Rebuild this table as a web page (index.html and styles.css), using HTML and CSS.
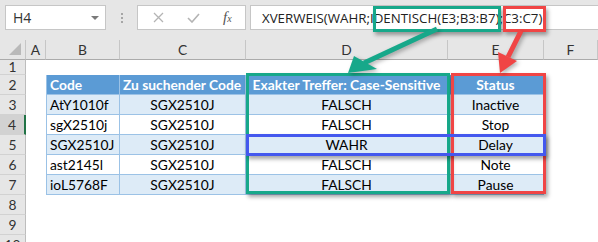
FILE: index.html
```html
<!DOCTYPE html>
<html>
	<head>
		<meta charset="UTF-8">
		<title>XVERWEIS - Case-Sensitive</title>
		<link rel="stylesheet" href="styles.css">
	</head>

	<body>
		<div class="app">
			<!-- Namenfeld + Bearbeitungsleiste -->
			<div class="bar">
				<div class="namebox">H4<span class="drop"></span></div>
				<div class="grip"><i></i><i></i><i></i></div>
				<div class="fxbox">
					<svg class="cancel" width="11" height="11" viewBox="0 0 11 11"><path d="M1 1L10 10M10 1L1 10" stroke="#b4b4b4" stroke-width="1.3" fill="none"/></svg>
					<svg class="enter" width="13" height="10" viewBox="0 0 13 10"><path d="M1 5L5 9L12 1" stroke="#b4b4b4" stroke-width="1.6" fill="none"/></svg>
					<span class="fx">f<sub>x</sub></span>
				</div>
				<div class="formula">XVERWEIS(WAHR;IDENTISCH(E3;B3:B7);C3:C7)</div>
			</div>

			<!-- Tabellenblatt -->
			<div class="sheet">
				<div class="corner"></div>
				<div class="ch">A</div><div class="ch">B</div><div class="ch">C</div><div class="ch">D</div><div class="ch">E</div><div class="ch">F</div>

				<div class="rh r1">1</div><div></div><div></div><div></div><div></div><div></div><div></div>

				<div class="rh">2</div><div></div>
				<div class="th first">Code</div>
				<div class="th">Zu suchender Code</div>
				<div class="th mid">Exakter Treffer: Case-Sensitive</div>
				<div class="th mid">Status</div>
				<div></div>

				<div class="rh">3</div><div></div>
				<div class="td first band">AtY1010f</div>
				<div class="td mid band">SGX2510J</div>
				<div class="td mid band">FALSCH</div>
				<div class="td mid band">Inactive</div>
				<div></div>

				<div class="rh sel">4</div><div></div>
				<div class="td first">sgX2510j</div>
				<div class="td mid">SGX2510J</div>
				<div class="td mid">FALSCH</div>
				<div class="td mid">Stop</div>
				<div></div>

				<div class="rh">5</div><div></div>
				<div class="td first band">SGX2510J</div>
				<div class="td mid band">SGX2510J</div>
				<div class="td mid band">WAHR</div>
				<div class="td mid band">Delay</div>
				<div></div>

				<div class="rh">6</div><div></div>
				<div class="td first">ast2145l</div>
				<div class="td mid">SGX2510J</div>
				<div class="td mid">FALSCH</div>
				<div class="td mid">Note</div>
				<div></div>

				<div class="rh">7</div><div></div>
				<div class="td first band">ioL5768F</div>
				<div class="td mid band">SGX2510J</div>
				<div class="td mid band">FALSCH</div>
				<div class="td mid band">Pause</div>
				<div></div>

				<div class="rh">8</div><div></div><div></div><div></div><div></div><div></div><div></div>
				<div class="rh">9</div><div></div><div></div><div></div><div></div><div></div><div></div>
				<div class="rh">10</div><div></div><div></div><div></div><div></div><div></div><div></div>
			</div>

			<!-- Markierungen -->
			<div class="mark green f-green"></div>
			<div class="mark red f-red"></div>
			<div class="mark green col-d"></div>
			<div class="mark red col-e"></div>
			<div class="mark blue row-5"></div>

			<svg class="arrows" width="598" height="242" viewBox="0 0 598 242">
				<line x1="437" y1="29" x2="364" y2="63" stroke="#17a88a" stroke-width="5"/>
				<polygon points="348,73 354,56 377,69" fill="#17a88a"/>
				<line x1="521" y1="31" x2="508" y2="57" stroke="#f04545" stroke-width="5"/>
				<polygon points="500,73 498,52 517,61" fill="#f04545"/>
			</svg>
		</div>
	</body>

</html>
```

FILE: styles.css
```css
/* Excel-Ansicht: Leiste oben, darunter Raster mit Kopfzeilen */
body {
	margin: 0;
	background: #fff;
	overflow: hidden;
}

.app {
	position: relative;
	width: 598px;
	height: 242px;
	overflow: hidden;
}

.bar {
	display: flex;
	align-items: flex-start;
	height: 40px;
	padding-top: 5px;
	box-sizing: border-box;
	background-color: #e6e6e6;
	font-family: "Open Sans", sans-serif;
	font-size: 13.3px;
	color: #222;
}

.namebox {
	position: relative;
	width: 101px;
	height: 25px;
	margin-left: 5px;
	padding-left: 7px;
	box-sizing: border-box;
	line-height: 24px;
	background: #fff;
	border: 1px solid #c6c6c6;
	color: #333;
	font-size: 14px;
}

.drop {
	position: absolute;
	right: 6px;
	top: 10px;
	border-left: 4px solid transparent;
	border-right: 4px solid transparent;
	border-top: 4px solid #7a7a7a;
}

.grip {
	display: flex;
	flex-direction: column;
	gap: 2px;
	width: 31px;
	padding-top: 8px;
	align-items: center;
}

.grip i {
	width: 2px;
	height: 2px;
	background: #a6a6a6;
}

.fxbox {
	display: flex;
	align-items: center;
	width: 109px;
	height: 25px;
	box-sizing: border-box;
	background: #fff;
	border: 1px solid #c6c6c6;
}

.cancel {
	margin-left: 15px;
}

.enter {
	margin-left: 23px;
}

.fx {
	margin-left: 23px;
	font-family: "Liberation Serif", serif;
	font-style: italic;
	font-size: 15px;
	color: #555;
}

.fx sub {
	font-size: 10px;
	vertical-align: 0;
}

.formula {
	flex: 1;
	height: 25px;
	margin-left: 4px;
	padding-left: 11px;
	box-sizing: border-box;
	line-height: 24px;
	background: #fff;
	border: 1px solid #c6c6c6;
	border-right: none;
	white-space: nowrap;
}

/* Raster */
.sheet {
	display: grid;
	grid-template-columns: 26px 20px 74px 126px 202px 96px 54px;
	grid-template-rows: 20px 15px repeat(9, 20px);
	font-family: "Lato", sans-serif;
	font-size: 13.8px;
	color: #000;
}

.sheet > div {
	box-sizing: border-box;
	white-space: nowrap;
}

.corner {
	position: relative;
	background: #e6e6e6;
	border-right: 1px solid #c6c6c6;
	border-bottom: 1px solid #ababab;
}

.corner::after {
	content: "";
	position: absolute;
	right: 4px;
	bottom: 4px;
	border-left: 12px solid transparent;
	border-bottom: 12px solid #b9b9b9;
}

.ch {
	background: #e6e6e6;
	border-right: 1px solid #c6c6c6;
	border-bottom: 1px solid #ababab;
	text-align: center;
	line-height: 20px;
	color: #333;
}

.rh {
	background: #e6e6e6;
	border-right: 1px solid #bdbdbd;
	border-bottom: 1px solid #d2d2d2;
	text-align: center;
	line-height: 20px;
	color: #333;
}

.rh.r1 {
	line-height: 14px;
}

.rh.sel {
	background: #d2d2d2;
	border-right: 2px solid #217346;
}

/* Tabelle B2:E7 */
.th,
.td {
	overflow: hidden;
	line-height: 19px;
	padding-left: 3px;
	border-right: 1px solid #9bc2e6;
	border-bottom: 1px solid #9bc2e6;
}

.th {
	background: #5b9bd5;
	color: #fff;
	font-weight: bold;
}

.first {
	border-left: 1px solid #9bc2e6;
}

.mid {
	text-align: center;
	padding-left: 0;
}

.band {
	background: #ddebf7;
}

/* farbige Rahmen über Leiste und Tabelle */
.mark {
	position: absolute;
	box-sizing: border-box;
	border: 3px solid;
	box-shadow: 2px 3px 4px rgba(0, 0, 0, 0.35);
}

.green { border-color: #17a88a; }
.red { border-color: #f04545; }
.blue { border-color: #4458ee; }

.f-green { left: 373px; top: 6px; width: 128px; height: 26px; }
.f-red { left: 503px; top: 6px; width: 43px; height: 26px; }
.col-d { left: 246px; top: 73px; width: 204px; height: 121px; }
.col-e { left: 451px; top: 73px; width: 95px; height: 121px; }
.row-5 { left: 246px; top: 134px; width: 300px; height: 22px; }

.arrows {
	position: absolute;
	left: 0;
	top: 0;
	pointer-events: none;
	filter: drop-shadow(2px 2px 2px rgba(0, 0, 0, 0.3));
}
```
